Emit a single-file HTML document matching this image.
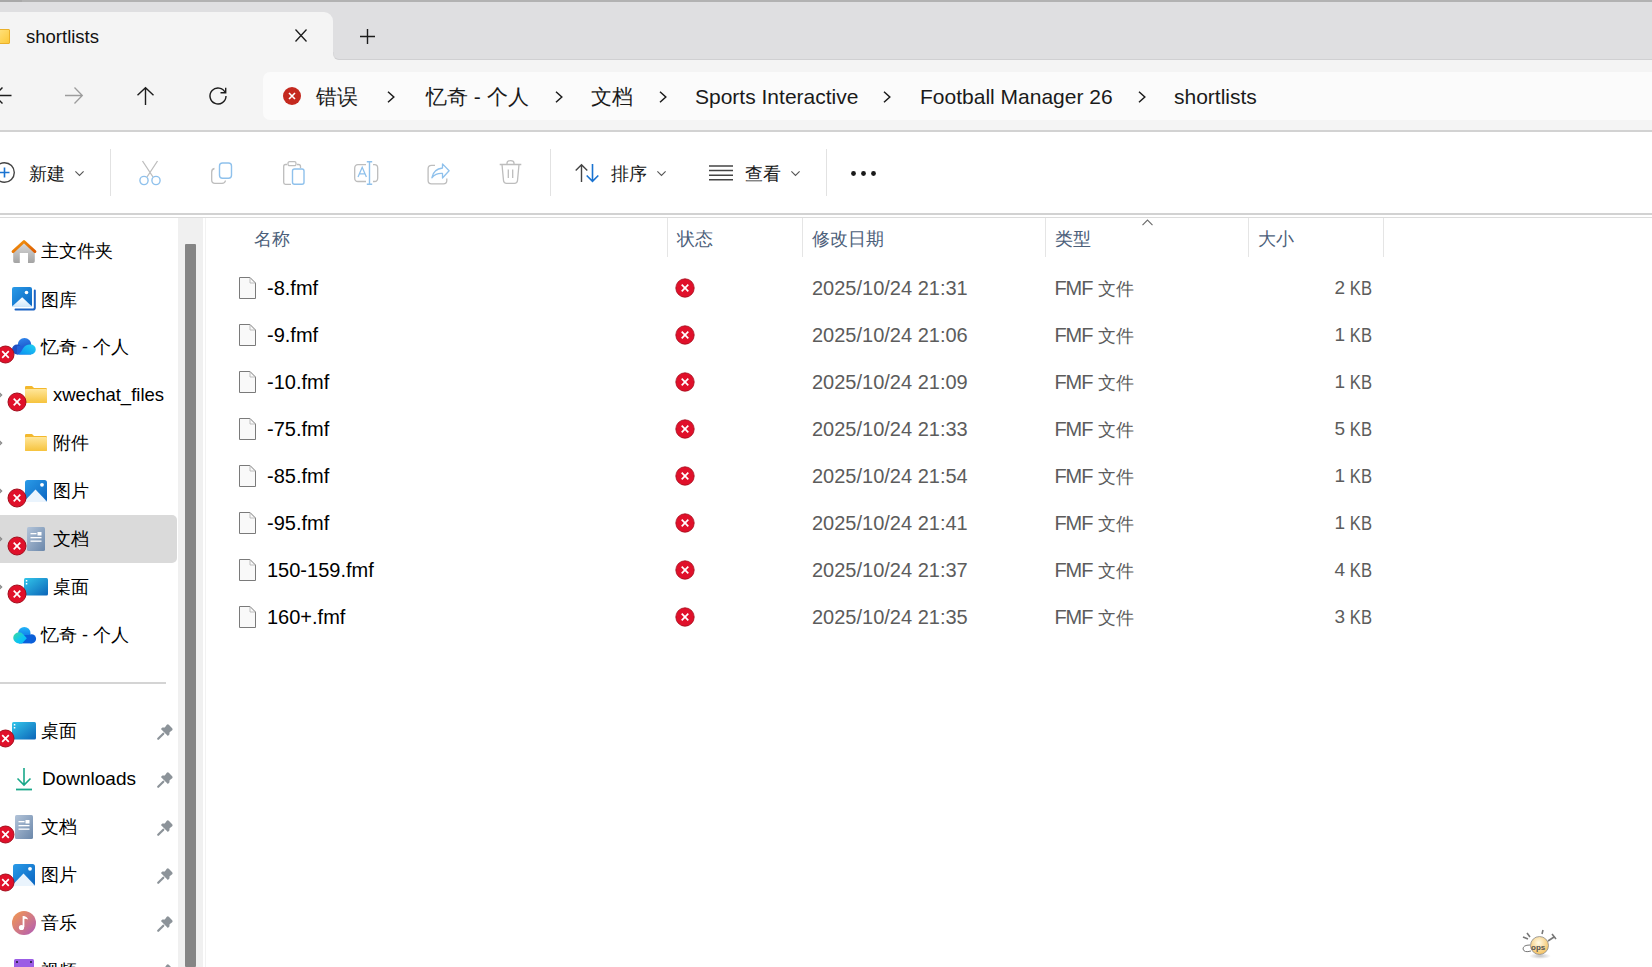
<!DOCTYPE html>
<html><head><meta charset="utf-8">
<style>
*{margin:0;padding:0;box-sizing:border-box}
html,body{width:1652px;height:967px;overflow:hidden;background:#fff;font-family:"Liberation Sans",sans-serif;color:#1a1a1a}
.a{position:absolute;white-space:nowrap}
svg.a{overflow:visible}
.vsep{width:1px;background:#e2e2e2}
.colsep{width:1px;background:#e5e5e5;top:218px;height:39px}
</style></head><body>
<div class="a" style="left:0;top:0;width:1652px;height:2px;background:#b2b2b2"></div>
<div class="a" style="left:0;top:0;width:22px;height:2px;background:#a9a9a9"></div>
<div class="a" style="left:0;top:2px;width:1652px;height:57px;background:#dfdfe1"></div>
<div class="a" style="left:-20px;top:12px;width:353px;height:48px;background:#f4f4f4;border-radius:9px 9px 0 0"></div>
<div class="a" style="left:0;top:59px;width:1652px;height:71px;background:#f4f4f4"></div>
<div class="a" style="left:333px;top:53px;width:6px;height:7px;background:#f4f4f4"></div>
<div class="a" style="left:333px;top:52px;width:1400px;height:7.5px;background:#dfdfe1;border-bottom-left-radius:6px;border-bottom:1px solid #d0d0d2;border-left:1px solid #d8d8da"></div>
<div class="a" style="left:263px;top:72px;width:1400px;height:48px;background:#fbfbfb;border-radius:7px"></div>
<div class="a" style="left:0;top:130px;width:1652px;height:2px;background:#d2d2d2"></div>
<div class="a" style="left:0;top:213px;width:1652px;height:2px;background:#d2d2d2"></div>
<div class="a" style="left:0;top:217px;width:1652px;height:1px;background:#dcdcdc"></div>
<div class="a" style="left:-2px;top:29px;width:11.5px;height:15px;background:linear-gradient(135deg,#ffe07a,#fcc93a);border:1px solid #eab02a;border-radius:1px"></div>
<div class="a " style="left:26px;top:28px;font-size:18.5px;line-height:18.5px;color:#111">shortlists</div>
<svg class="a" style="left:295px;top:29.3px" width="12" height="13" viewBox="0 0 12 13"><path d="M0.5 0.5L11.5 12.5M11.5 0.5L0.5 12.5" stroke="#1c1c1c" stroke-width="1.3"/></svg>
<svg class="a" style="left:360px;top:29px" width="15" height="15" viewBox="0 0 15 15"><path d="M7.5 0V15M0 7.5H15" stroke="#1c1c1c" stroke-width="1.4"/></svg>
<svg class="a" style="left:-6.5px;top:87px" width="19" height="18" viewBox="0 0 19 18"><path d="M8.5 0.5L0.7 8.5L8.5 16.5M0.7 8.5H17.5" stroke="#1c1c1c" stroke-width="1.4" fill="none"/></svg>
<svg class="a" style="left:65px;top:87px" width="18" height="17" viewBox="0 0 18 17"><path d="M9.5 0.5L17.3 8.5L9.5 16.5M17.3 8.5H0" stroke="#9c9c9c" stroke-width="1.3" fill="none"/></svg>
<svg class="a" style="left:137px;top:87px" width="17" height="18" viewBox="0 0 17 18"><path d="M0.5 8.3L8.5 0.7L16.5 8.3M8.5 0.7V18" stroke="#1c1c1c" stroke-width="1.4" fill="none"/></svg>
<svg class="a" style="left:209px;top:87px" width="18" height="18" viewBox="0 0 18 18"><path d="M16.2 5.5A8 8 0 1 0 17 9" stroke="#1c1c1c" stroke-width="1.4" fill="none"/><path d="M16.7 0.8V5.8H11.5" stroke="#1c1c1c" stroke-width="1.4" fill="none"/></svg>
<svg class="a" style="left:283px;top:87px" width="18" height="18" viewBox="0 0 18 18"><circle cx="9" cy="9" r="9" fill="#c4291f"/><path d="M6 6L12 12M12 6L6 12" stroke="#fff" stroke-width="1.6"/></svg>
<div class="a " style="left:316px;top:85.5px;font-size:21px;line-height:21px;">错误</div>
<div class="a " style="left:426px;top:85.5px;font-size:21px;line-height:21px;">忆奇 - 个人</div>
<div class="a " style="left:591px;top:85.5px;font-size:21px;line-height:21px;">文档</div>
<div class="a " style="left:695px;top:86px;font-size:21px;line-height:21px;">Sports Interactive</div>
<div class="a " style="left:920px;top:86px;font-size:21px;line-height:21px;">Football Manager 26</div>
<div class="a " style="left:1174px;top:86px;font-size:21px;line-height:21px;">shortlists</div>
<svg class="a" style="left:387px;top:91px" width="8" height="12" viewBox="0 0 8 12"><path d="M1 0.7L6.8 6L1 11.3" stroke="#1c1c1c" stroke-width="1.5" fill="none"/></svg>
<svg class="a" style="left:555px;top:91px" width="8" height="12" viewBox="0 0 8 12"><path d="M1 0.7L6.8 6L1 11.3" stroke="#1c1c1c" stroke-width="1.5" fill="none"/></svg>
<svg class="a" style="left:659px;top:91px" width="8" height="12" viewBox="0 0 8 12"><path d="M1 0.7L6.8 6L1 11.3" stroke="#1c1c1c" stroke-width="1.5" fill="none"/></svg>
<svg class="a" style="left:883px;top:91px" width="8" height="12" viewBox="0 0 8 12"><path d="M1 0.7L6.8 6L1 11.3" stroke="#1c1c1c" stroke-width="1.5" fill="none"/></svg>
<svg class="a" style="left:1138px;top:91px" width="8" height="12" viewBox="0 0 8 12"><path d="M1 0.7L6.8 6L1 11.3" stroke="#1c1c1c" stroke-width="1.5" fill="none"/></svg>
<svg class="a" style="left:-6px;top:162px" width="22" height="22" viewBox="0 0 22 22"><circle cx="10.5" cy="10.5" r="9.8" stroke="#444" stroke-width="1.4" fill="none"/><path d="M10.5 5.5V15.5M5.5 10.5H15.5" stroke="#1a73d1" stroke-width="1.6"/></svg>
<div class="a " style="left:29px;top:164.5px;font-size:18px;line-height:18px;">新建</div>
<svg class="a" style="left:74.5px;top:171px" width="9" height="5" viewBox="0 0 9 5"><path d="M0.4 0.4L4.5 4.5L8.6 0.4" stroke="#555" stroke-width="1.1" fill="none"/></svg>
<div class="a vsep" style="left:110px;top:149px;height:47px"></div>
<svg class="a" style="left:139px;top:160px" width="22" height="25" viewBox="0 0 22 25"><path d="M3.5 1L14 17M18.5 1L8 17" stroke="#bdbdbd" stroke-width="1.3" fill="none"/><circle cx="5" cy="20.5" r="4.1" fill="#fff" stroke="#8fc1ec" stroke-width="1.4"/><circle cx="17" cy="20.5" r="4.1" fill="#fff" stroke="#8fc1ec" stroke-width="1.4"/></svg>
<svg class="a" style="left:211px;top:162px" width="22" height="22" viewBox="0 0 22 22"><path d="M3.5 6.5Q0.7 7 0.7 10V18Q0.7 21.3 4 21.3H11Q14 21.3 14.5 18.5" stroke="#bdbdbd" stroke-width="1.3" fill="none"/><rect x="8.5" y="1" width="12" height="15.3" rx="3" stroke="#8fc1ec" stroke-width="1.4" fill="none"/></svg>
<svg class="a" style="left:283px;top:161px" width="22" height="24" viewBox="0 0 22 24"><path d="M4 3.5H2.5Q0.7 3.5 0.7 5.5V21.5Q0.7 23.3 2.5 23.3H8M14 3.5H15.5Q17.5 3.5 17.5 5.5V7" stroke="#bdbdbd" stroke-width="1.3" fill="none"/><rect x="5" y="0.7" width="8" height="4" rx="1.5" stroke="#bdbdbd" stroke-width="1.3" fill="none"/><rect x="9.5" y="8" width="11.5" height="15.3" rx="2" stroke="#8fc1ec" stroke-width="1.4" fill="none"/></svg>
<svg class="a" style="left:354px;top:161px" width="25" height="24" viewBox="0 0 25 24"><path d="M12 3.7H4Q0.7 3.7 0.7 7.2V17Q0.7 20.5 4 20.5H12M19 3.7H20.5Q23.7 3.7 23.7 7.2V17Q23.7 20.5 20.5 20.5H19" stroke="#bdbdbd" stroke-width="1.3" fill="none"/><path d="M4 16L8.2 6.3L12.4 16M5.5 12.8H10.9" stroke="#8fc1ec" stroke-width="1.3" fill="none"/><path d="M15.5 0.7V23.3M12.8 0.7H18.2M12.8 23.3H18.2" stroke="#8fc1ec" stroke-width="1.4" fill="none"/></svg>
<svg class="a" style="left:427px;top:162px" width="23" height="22" viewBox="0 0 23 22"><path d="M8 3.4H4.5Q1.1 3.4 1.1 6.8V18.4Q1.1 21.8 4.5 21.8H16.4Q19.8 21.8 19.8 18.4V16.6" stroke="#bdbdbd" stroke-width="1.3" fill="none"/><path d="M4.9 15.7Q6.5 7 15.5 6V1.9L22.1 8.8L15.5 16V11.5Q9 11 4.9 15.7Z" stroke="#8fc1ec" stroke-width="1.3" fill="none" stroke-linejoin="round"/></svg>
<svg class="a" style="left:498.5px;top:160px" width="23" height="24" viewBox="0 0 23 24"><path d="M0.7 4.5H22.3M8 4.5V3Q8 0.7 11.5 0.7Q15 0.7 15 3V4.5M3 4.5L4.5 20.5Q4.8 23.3 7.5 23.3H15.5Q18.2 23.3 18.5 20.5L20 4.5M9.3 9.5V18M13.7 9.5V18" stroke="#bdbdbd" stroke-width="1.3" fill="none"/></svg>
<div class="a vsep" style="left:550px;top:149px;height:47px"></div>
<svg class="a" style="left:575px;top:164px" width="24" height="18" viewBox="0 0 24 18"><path d="M0.7 6.5L6.5 0.7L12.3 6.5M6.5 0.7V18" stroke="#444" stroke-width="1.4" fill="none"/><path d="M11.7 11.5L17.5 17.3L23.3 11.5M17.5 17.3V0" stroke="#1a73d1" stroke-width="1.6" fill="none"/></svg>
<div class="a " style="left:611px;top:164.5px;font-size:18px;line-height:18px;">排序</div>
<svg class="a" style="left:657px;top:171px" width="9" height="5" viewBox="0 0 9 5"><path d="M0.4 0.4L4.5 4.5L8.6 0.4" stroke="#555" stroke-width="1.1" fill="none"/></svg>
<svg class="a" style="left:709px;top:165px" width="24" height="16" viewBox="0 0 24 16"><path d="M0 1H24M0 5.5H24M0 10.2H24M0 14.8H24" stroke="#444" stroke-width="1.4"/></svg>
<div class="a " style="left:745px;top:164.5px;font-size:18px;line-height:18px;">查看</div>
<svg class="a" style="left:790.5px;top:171px" width="9" height="5" viewBox="0 0 9 5"><path d="M0.4 0.4L4.5 4.5L8.6 0.4" stroke="#555" stroke-width="1.1" fill="none"/></svg>
<div class="a vsep" style="left:826px;top:149px;height:47px"></div>
<svg class="a" style="left:851px;top:171px" width="25" height="5" viewBox="0 0 25 5"><circle cx="2.5" cy="2.5" r="2.4" fill="#1a1a1a"/><circle cx="12.5" cy="2.5" r="2.4" fill="#1a1a1a"/><circle cx="22.5" cy="2.5" r="2.4" fill="#1a1a1a"/></svg>
<div class="a" style="left:0;top:515px;width:177px;height:48px;background:#dadada;border-radius:0 5px 5px 0"></div>
<div class="a" style="left:178px;top:218px;width:25px;height:749px;background:#f0f0f0"></div>
<div class="a" style="left:185px;top:244px;width:11px;height:723px;background:#858585;border-radius:1px"></div>
<div class="a" style="left:205px;top:218px;width:1px;height:749px;background:#f2f2f2"></div>
<div class="a" style="left:0;top:682px;width:166px;height:2px;background:#d4d4d4"></div>
<svg class="a" style="left:12px;top:240px" width="24" height="23" viewBox="0 0 24 23"><defs><linearGradient id="hg" x1="0" y1="0" x2="0" y2="1"><stop offset="0" stop-color="#dcdcdc"/><stop offset="1" stop-color="#a3a3a3"/></linearGradient><linearGradient id="hr" x1="0" y1="0" x2="1" y2="1"><stop offset="0" stop-color="#f59a10"/><stop offset="1" stop-color="#dc5a00"/></linearGradient></defs><path d="M1.2 11.5V21.3Q1.2 23 2.9 23H7.8V13H16V23H21.1Q22.8 23 22.8 21.3V11.5L12 2Z" fill="url(#hg)"/><path d="M1 11.6L12 1.5L23 11.6" stroke="url(#hr)" stroke-width="2.8" fill="none" stroke-linejoin="round" stroke-linecap="round"/></svg>
<div class="a " style="left:41px;top:241.5px;font-size:18px;line-height:18px;color:#000">主文件夹</div>
<svg class="a" style="left:12px;top:287px" width="24" height="24" viewBox="0 0 24 24"><defs><linearGradient id="gg287" x1="0" y1="0" x2="1" y2="1"><stop offset="0" stop-color="#2a9be8"/><stop offset="1" stop-color="#0a64c0"/></linearGradient><linearGradient id="gm287" x1="0" y1="0" x2="0" y2="1"><stop offset="0" stop-color="#ffffff"/><stop offset="1" stop-color="#cfe6fa"/></linearGradient></defs><path d="M3.5 22.6H21Q22.8 22.6 22.8 20.8V3.5" stroke="#1a62c4" stroke-width="2" fill="none" stroke-linecap="round"/><rect x="-0.3" y="-0.3" width="20.6" height="20.6" rx="2.3" fill="#fff"/><rect x="0" y="0" width="20" height="20" rx="2" fill="url(#gg287)"/><path d="M0.3 19.2L10.2 10.2L19.7 19.2V19.5Q19.7 20 19 20H1Q0.3 20 0.3 19.5Z" fill="url(#gm287)"/><circle cx="14.5" cy="5.5" r="1.8" fill="#fff"/></svg>
<div class="a " style="left:41px;top:290.5px;font-size:18px;line-height:18px;color:#000">图库</div>
<svg class="a" style="left:12px;top:337px" width="24" height="18" viewBox="0 0 24 18"><defs><linearGradient id="cb337" x1="0" y1="0" x2="0.3" y2="1"><stop offset="0" stop-color="#2f8af0"/><stop offset="1" stop-color="#1a4fc4"/></linearGradient><linearGradient id="cf337" x1="0" y1="1" x2="1" y2="0"><stop offset="0" stop-color="#0a8ef0"/><stop offset="1" stop-color="#22d2f2"/></linearGradient></defs><circle cx="12.5" cy="7.8" r="6.8" fill="url(#cb337)"/><circle cx="5" cy="12.5" r="5" fill="#1d4fc2"/><rect x="5" y="9" width="14" height="8.5" fill="#2060d8"/><path d="M6.5 17.5Q9 15.5 11 11.5Q13.5 7.2 18.5 7.5A5 5 0 0 1 19 17.5Z" fill="url(#cf337)"/></svg>
<svg class="a" style="left:-4.5px;top:344.5px" width="19" height="19" viewBox="0 0 19 19"><circle cx="9.5" cy="9.5" r="8.5" fill="#e0102a" stroke="#a30d1c" stroke-width="1"/><path d="M6.2 6.2L12.8 12.8M12.8 6.2L6.2 12.8" stroke="#fff" stroke-width="1.7"/></svg>
<div class="a " style="left:41px;top:337.5px;font-size:18px;line-height:18px;color:#000">忆奇 - 个人</div>
<svg class="a" style="left:-3px;top:391px" width="6" height="8" viewBox="0 0 6 8"><path d="M1 0.5L4.5 4L1 7.5" stroke="#8a8a8a" stroke-width="1.5" fill="none"/></svg>
<svg class="a" style="left:25px;top:386px" width="22" height="17" viewBox="0 0 22 17"><defs><linearGradient id="fg386" x1="0" y1="0" x2="0" y2="1"><stop offset="0" stop-color="#ffe69a"/><stop offset="1" stop-color="#f6c33d"/></linearGradient></defs><path d="M0 1.2Q0 0 1.2 0H7L9 2H20.8Q22 2 22 3.2V15.8Q22 17 20.8 17H1.2Q0 17 0 15.8Z" fill="#f3b82d"/><path d="M0 4Q0 3 1 3H21Q22 3 22 4V15.8Q22 17 20.8 17H1.2Q0 17 0 15.8Z" fill="url(#fg386)"/></svg>
<svg class="a" style="left:7.0px;top:392.0px" width="20" height="20" viewBox="0 0 20 20"><circle cx="10.0" cy="10.0" r="9.0" fill="#e0102a" stroke="#a30d1c" stroke-width="1"/><path d="M6.7 6.7L13.3 13.3M13.3 6.7L6.7 13.3" stroke="#fff" stroke-width="1.7"/></svg>
<div class="a " style="left:53px;top:385.5px;font-size:18.5px;line-height:18.5px;color:#000">xwechat_files</div>
<svg class="a" style="left:-3px;top:439px" width="6" height="8" viewBox="0 0 6 8"><path d="M1 0.5L4.5 4L1 7.5" stroke="#8a8a8a" stroke-width="1.5" fill="none"/></svg>
<svg class="a" style="left:25px;top:434px" width="22" height="17" viewBox="0 0 22 17"><defs><linearGradient id="fg434" x1="0" y1="0" x2="0" y2="1"><stop offset="0" stop-color="#ffe69a"/><stop offset="1" stop-color="#f6c33d"/></linearGradient></defs><path d="M0 1.2Q0 0 1.2 0H7L9 2H20.8Q22 2 22 3.2V15.8Q22 17 20.8 17H1.2Q0 17 0 15.8Z" fill="#f3b82d"/><path d="M0 4Q0 3 1 3H21Q22 3 22 4V15.8Q22 17 20.8 17H1.2Q0 17 0 15.8Z" fill="url(#fg434)"/></svg>
<div class="a " style="left:53px;top:433.5px;font-size:18px;line-height:18px;color:#000">附件</div>
<svg class="a" style="left:-3px;top:487px" width="6" height="8" viewBox="0 0 6 8"><path d="M1 0.5L4.5 4L1 7.5" stroke="#8a8a8a" stroke-width="1.5" fill="none"/></svg>
<svg class="a" style="left:25px;top:480px" width="22" height="22" viewBox="0 0 22 22"><defs><linearGradient id="pg480" x1="0" y1="0" x2="1" y2="1"><stop offset="0" stop-color="#2a9be8"/><stop offset="1" stop-color="#0a64c0"/></linearGradient></defs><rect x="0" y="0" width="22" height="22" rx="2.5" fill="url(#pg480)"/><path d="M0 20.5L10.5 9.5L21 20.5V22H0Z" fill="#eaf4fd"/><circle cx="17" cy="4.8" r="1.9" fill="#fff"/></svg>
<svg class="a" style="left:7.0px;top:488.0px" width="20" height="20" viewBox="0 0 20 20"><circle cx="10.0" cy="10.0" r="9.0" fill="#e0102a" stroke="#a30d1c" stroke-width="1"/><path d="M6.7 6.7L13.3 13.3M13.3 6.7L6.7 13.3" stroke="#fff" stroke-width="1.7"/></svg>
<div class="a " style="left:53px;top:481.5px;font-size:18px;line-height:18px;color:#000">图片</div>
<svg class="a" style="left:-3px;top:535px" width="6" height="8" viewBox="0 0 6 8"><path d="M1 0.5L4.5 4L1 7.5" stroke="#8a8a8a" stroke-width="1.5" fill="none"/></svg>
<svg class="a" style="left:27px;top:527px" width="18" height="24" viewBox="0 0 18 24"><defs><linearGradient id="dg527" x1="0" y1="0" x2="1" y2="1"><stop offset="0" stop-color="#b3c4d9"/><stop offset="1" stop-color="#6b87aa"/></linearGradient></defs><rect x="0" y="0" width="18" height="24" rx="1.5" fill="url(#dg527)"/><rect x="3.5" y="6" width="6" height="1.3" fill="#fff"/><rect x="10.5" y="5" width="4" height="3.5" fill="#fff"/><rect x="3.5" y="10" width="11" height="1.3" fill="#fff"/><rect x="3.5" y="13.5" width="11" height="1.3" fill="#fff"/></svg>
<svg class="a" style="left:7.0px;top:536.0px" width="20" height="20" viewBox="0 0 20 20"><circle cx="10.0" cy="10.0" r="9.0" fill="#e0102a" stroke="#a30d1c" stroke-width="1"/><path d="M6.7 6.7L13.3 13.3M13.3 6.7L6.7 13.3" stroke="#fff" stroke-width="1.7"/></svg>
<div class="a " style="left:53px;top:529.5px;font-size:18px;line-height:18px;color:#000">文档</div>
<svg class="a" style="left:-3px;top:583px" width="6" height="8" viewBox="0 0 6 8"><path d="M1 0.5L4.5 4L1 7.5" stroke="#8a8a8a" stroke-width="1.5" fill="none"/></svg>
<svg class="a" style="left:24px;top:578px" width="24" height="18" viewBox="0 0 24 18"><defs><linearGradient id="kg578" x1="0" y1="0" x2="1" y2="1"><stop offset="0" stop-color="#33c6ea"/><stop offset="1" stop-color="#0b64b8"/></linearGradient></defs><rect x="0" y="0" width="24" height="17.5" rx="1.5" fill="url(#kg578)"/><rect x="1.8" y="2" width="1.5" height="1.5" fill="#fff"/><rect x="1.8" y="5" width="1.5" height="1.5" fill="#fff"/></svg>
<svg class="a" style="left:7.0px;top:584.0px" width="20" height="20" viewBox="0 0 20 20"><circle cx="10.0" cy="10.0" r="9.0" fill="#e0102a" stroke="#a30d1c" stroke-width="1"/><path d="M6.7 6.7L13.3 13.3M13.3 6.7L6.7 13.3" stroke="#fff" stroke-width="1.7"/></svg>
<div class="a " style="left:53px;top:577.5px;font-size:18px;line-height:18px;color:#000">桌面</div>
<svg class="a" style="left:12.5px;top:626.5px" width="24" height="17" viewBox="0 0 24 17"><defs><linearGradient id="ct626.5" x1="0" y1="0" x2="1" y2="1"><stop offset="0" stop-color="#3ddc9c"/><stop offset="0.6" stop-color="#0cc4f2"/><stop offset="1" stop-color="#0ab4f5"/></linearGradient><linearGradient id="cu626.5" x1="0" y1="0" x2="0" y2="1"><stop offset="0" stop-color="#22b4f8"/><stop offset="1" stop-color="#0a6ae6"/></linearGradient></defs><circle cx="11.3" cy="6.2" r="6.2" fill="url(#cu626.5)"/><circle cx="18.5" cy="11.8" r="4.6" fill="#0b5fd8"/><rect x="6" y="8" width="12.5" height="8.4" fill="#0a60dc"/><path d="M0.2 11A5.8 5.8 0 0 1 6 5.2Q8.5 5.3 10.5 7.5L13.8 11.2L9 16.4H6A5.8 5.8 0 0 1 0.2 11Z" fill="url(#ct626.5)"/></svg>
<div class="a " style="left:41px;top:625.5px;font-size:18px;line-height:18px;color:#000">忆奇 - 个人</div>
<svg class="a" style="left:12px;top:722px" width="24" height="18" viewBox="0 0 24 18"><defs><linearGradient id="kg722" x1="0" y1="0" x2="1" y2="1"><stop offset="0" stop-color="#33c6ea"/><stop offset="1" stop-color="#0b64b8"/></linearGradient></defs><rect x="0" y="0" width="24" height="17.5" rx="1.5" fill="url(#kg722)"/><rect x="1.8" y="2" width="1.5" height="1.5" fill="#fff"/><rect x="1.8" y="5" width="1.5" height="1.5" fill="#fff"/></svg>
<svg class="a" style="left:-4.0px;top:728.5px" width="19" height="19" viewBox="0 0 19 19"><circle cx="9.5" cy="9.5" r="8.5" fill="#e0102a" stroke="#a30d1c" stroke-width="1"/><path d="M6.2 6.2L12.8 12.8M12.8 6.2L6.2 12.8" stroke="#fff" stroke-width="1.7"/></svg>
<div class="a " style="left:41px;top:721.5px;font-size:18px;line-height:18px;color:#000">桌面</div>
<svg class="a" style="left:157px;top:723.5px" width="16" height="16" viewBox="0 0 16 16"><path d="M9.8 0.8Q10.8 -0.1 11.8 0.8L15.2 4.2Q16.1 5.2 15.2 6.2L12.6 8.2L12.4 10.6L10.9 12.1L3.9 5.1L5.4 3.6L7.8 3.4Z" fill="#8c9399"/><path d="M6.3 9.7L1.2 14.8" stroke="#8c9399" stroke-width="2.2" stroke-linecap="round"/></svg>
<svg class="a" style="left:16px;top:768px" width="16" height="23" viewBox="0 0 16 23"><path d="M8 0V17M1.5 10.5L8 17L14.5 10.5" stroke="#1aa88a" stroke-width="1.6" fill="none"/><path d="M0 21.5H16" stroke="#1aa88a" stroke-width="1.8"/></svg>
<div class="a " style="left:42px;top:769px;font-size:19px;line-height:19px;color:#000">Downloads</div>
<svg class="a" style="left:157px;top:771.5px" width="16" height="16" viewBox="0 0 16 16"><path d="M9.8 0.8Q10.8 -0.1 11.8 0.8L15.2 4.2Q16.1 5.2 15.2 6.2L12.6 8.2L12.4 10.6L10.9 12.1L3.9 5.1L5.4 3.6L7.8 3.4Z" fill="#8c9399"/><path d="M6.3 9.7L1.2 14.8" stroke="#8c9399" stroke-width="2.2" stroke-linecap="round"/></svg>
<svg class="a" style="left:15px;top:815px" width="18" height="24" viewBox="0 0 18 24"><defs><linearGradient id="dg815" x1="0" y1="0" x2="1" y2="1"><stop offset="0" stop-color="#b3c4d9"/><stop offset="1" stop-color="#6b87aa"/></linearGradient></defs><rect x="0" y="0" width="18" height="24" rx="1.5" fill="url(#dg815)"/><rect x="3.5" y="6" width="6" height="1.3" fill="#fff"/><rect x="10.5" y="5" width="4" height="3.5" fill="#fff"/><rect x="3.5" y="10" width="11" height="1.3" fill="#fff"/><rect x="3.5" y="13.5" width="11" height="1.3" fill="#fff"/></svg>
<svg class="a" style="left:-4.0px;top:824.5px" width="19" height="19" viewBox="0 0 19 19"><circle cx="9.5" cy="9.5" r="8.5" fill="#e0102a" stroke="#a30d1c" stroke-width="1"/><path d="M6.2 6.2L12.8 12.8M12.8 6.2L6.2 12.8" stroke="#fff" stroke-width="1.7"/></svg>
<div class="a " style="left:41px;top:817.5px;font-size:18px;line-height:18px;color:#000">文档</div>
<svg class="a" style="left:157px;top:819.5px" width="16" height="16" viewBox="0 0 16 16"><path d="M9.8 0.8Q10.8 -0.1 11.8 0.8L15.2 4.2Q16.1 5.2 15.2 6.2L12.6 8.2L12.4 10.6L10.9 12.1L3.9 5.1L5.4 3.6L7.8 3.4Z" fill="#8c9399"/><path d="M6.3 9.7L1.2 14.8" stroke="#8c9399" stroke-width="2.2" stroke-linecap="round"/></svg>
<svg class="a" style="left:13px;top:864px" width="22" height="22" viewBox="0 0 22 22"><defs><linearGradient id="pg864" x1="0" y1="0" x2="1" y2="1"><stop offset="0" stop-color="#2a9be8"/><stop offset="1" stop-color="#0a64c0"/></linearGradient></defs><rect x="0" y="0" width="22" height="22" rx="2.5" fill="url(#pg864)"/><path d="M0 20.5L10.5 9.5L21 20.5V22H0Z" fill="#eaf4fd"/><circle cx="17" cy="4.8" r="1.9" fill="#fff"/></svg>
<svg class="a" style="left:-4.5px;top:872.5px" width="19" height="19" viewBox="0 0 19 19"><circle cx="9.5" cy="9.5" r="8.5" fill="#e0102a" stroke="#a30d1c" stroke-width="1"/><path d="M6.2 6.2L12.8 12.8M12.8 6.2L6.2 12.8" stroke="#fff" stroke-width="1.7"/></svg>
<div class="a " style="left:41px;top:865.5px;font-size:18px;line-height:18px;color:#000">图片</div>
<svg class="a" style="left:157px;top:867.5px" width="16" height="16" viewBox="0 0 16 16"><path d="M9.8 0.8Q10.8 -0.1 11.8 0.8L15.2 4.2Q16.1 5.2 15.2 6.2L12.6 8.2L12.4 10.6L10.9 12.1L3.9 5.1L5.4 3.6L7.8 3.4Z" fill="#8c9399"/><path d="M6.3 9.7L1.2 14.8" stroke="#8c9399" stroke-width="2.2" stroke-linecap="round"/></svg>
<svg class="a" style="left:12px;top:911px" width="24" height="24" viewBox="0 0 24 24"><defs><linearGradient id="mg" x1="0" y1="0" x2="1" y2="1"><stop offset="0" stop-color="#f59a4c"/><stop offset="1" stop-color="#b05bb8"/></linearGradient></defs><circle cx="12" cy="12" r="12" fill="url(#mg)"/><path d="M11.5 5V16" stroke="#fff" stroke-width="1.8"/><circle cx="9.5" cy="16.5" r="2.6" fill="#fff"/><path d="M11.5 5Q15.5 5.5 16 8.5Q14 7.5 11.5 8Z" fill="#fff"/></svg>
<div class="a " style="left:41px;top:913.5px;font-size:18px;line-height:18px;color:#000">音乐</div>
<svg class="a" style="left:157px;top:915.5px" width="16" height="16" viewBox="0 0 16 16"><path d="M9.8 0.8Q10.8 -0.1 11.8 0.8L15.2 4.2Q16.1 5.2 15.2 6.2L12.6 8.2L12.4 10.6L10.9 12.1L3.9 5.1L5.4 3.6L7.8 3.4Z" fill="#8c9399"/><path d="M6.3 9.7L1.2 14.8" stroke="#8c9399" stroke-width="2.2" stroke-linecap="round"/></svg>
<svg class="a" style="left:14px;top:959px" width="20" height="10" viewBox="0 0 20 10"><rect x="0" y="0" width="20" height="10" rx="1.5" fill="#9b5de5"/><rect x="2" y="2" width="2" height="2" fill="#3b2a5e"/><rect x="16" y="2" width="2" height="2" fill="#3b2a5e"/></svg>
<div class="a " style="left:41px;top:961.5px;font-size:18px;line-height:18px;color:#000">视频</div>
<svg class="a" style="left:157px;top:963.5px" width="16" height="16" viewBox="0 0 16 16"><path d="M9.8 0.8Q10.8 -0.1 11.8 0.8L15.2 4.2Q16.1 5.2 15.2 6.2L12.6 8.2L12.4 10.6L10.9 12.1L3.9 5.1L5.4 3.6L7.8 3.4Z" fill="#8c9399"/><path d="M6.3 9.7L1.2 14.8" stroke="#8c9399" stroke-width="2.2" stroke-linecap="round"/></svg>
<div class="a colsep" style="left:667px"></div>
<div class="a colsep" style="left:802px"></div>
<div class="a colsep" style="left:1045px"></div>
<div class="a colsep" style="left:1248px"></div>
<div class="a colsep" style="left:1383px"></div>
<svg class="a" style="left:1142px;top:219px" width="11" height="7" viewBox="0 0 11 7"><path d="M0.5 6.2L5.5 1L10.5 6.2" stroke="#6b6b6b" stroke-width="1.1" fill="none"/></svg>
<div class="a " style="left:254px;top:229.5px;font-size:18px;line-height:18px;color:#4c607a">名称</div>
<div class="a " style="left:677px;top:229.5px;font-size:18px;line-height:18px;color:#4c607a">状态</div>
<div class="a " style="left:812px;top:229.5px;font-size:18px;line-height:18px;color:#4c607a">修改日期</div>
<div class="a " style="left:1055px;top:229.5px;font-size:18px;line-height:18px;color:#4c607a">类型</div>
<div class="a " style="left:1258px;top:229.5px;font-size:18px;line-height:18px;color:#4c607a">大小</div>
<svg class="a" style="left:239px;top:277px" width="17" height="22" viewBox="0 0 17 22"><path d="M0.5 0.5H11L16.5 6V21.5H0.5Z" fill="#f9f9f9" stroke="#7a7a7a" stroke-width="1" stroke-linejoin="round"/><path d="M11 0.5V6H16.5" stroke="#b0b0b0" stroke-width="0.8" fill="none"/></svg>
<div class="a " style="left:267px;top:277.5px;font-size:20px;line-height:20px;color:#000">-8.fmf</div>
<svg class="a" style="left:675px;top:278px" width="20" height="20" viewBox="0 0 20 20"><circle cx="10" cy="10" r="9.2" fill="#e0102a" stroke="#a30d1c" stroke-width="0.8"/><path d="M6.7 6.7L13.3 13.3M13.3 6.7L6.7 13.3" stroke="#fff" stroke-width="1.7"/></svg>
<div class="a " style="left:812px;top:277.5px;font-size:20px;line-height:20px;color:#5c5c5c">2025/10/24 21:31</div>
<div class="a " style="left:1054.5px;top:277.5px;font-size:20px;line-height:20px;color:#5c5c5c"><span style="letter-spacing:-1.1px">FMF</span> <span style="font-size:18px">文件</span></div>
<div class="a" style="left:1245px;width:100px;text-align:right;top:277.5px;font-size:19px;line-height:20px;color:#5c5c5c">2</div>
<div class="a" style="left:1272px;width:100px;text-align:right;top:277.5px;font-size:20px;line-height:20px;color:#5c5c5c;transform:scaleX(0.83);transform-origin:100% 50%">KB</div>
<svg class="a" style="left:239px;top:324px" width="17" height="22" viewBox="0 0 17 22"><path d="M0.5 0.5H11L16.5 6V21.5H0.5Z" fill="#f9f9f9" stroke="#7a7a7a" stroke-width="1" stroke-linejoin="round"/><path d="M11 0.5V6H16.5" stroke="#b0b0b0" stroke-width="0.8" fill="none"/></svg>
<div class="a " style="left:267px;top:324.5px;font-size:20px;line-height:20px;color:#000">-9.fmf</div>
<svg class="a" style="left:675px;top:325px" width="20" height="20" viewBox="0 0 20 20"><circle cx="10" cy="10" r="9.2" fill="#e0102a" stroke="#a30d1c" stroke-width="0.8"/><path d="M6.7 6.7L13.3 13.3M13.3 6.7L6.7 13.3" stroke="#fff" stroke-width="1.7"/></svg>
<div class="a " style="left:812px;top:324.5px;font-size:20px;line-height:20px;color:#5c5c5c">2025/10/24 21:06</div>
<div class="a " style="left:1054.5px;top:324.5px;font-size:20px;line-height:20px;color:#5c5c5c"><span style="letter-spacing:-1.1px">FMF</span> <span style="font-size:18px">文件</span></div>
<div class="a" style="left:1245px;width:100px;text-align:right;top:324.5px;font-size:19px;line-height:20px;color:#5c5c5c">1</div>
<div class="a" style="left:1272px;width:100px;text-align:right;top:324.5px;font-size:20px;line-height:20px;color:#5c5c5c;transform:scaleX(0.83);transform-origin:100% 50%">KB</div>
<svg class="a" style="left:239px;top:371px" width="17" height="22" viewBox="0 0 17 22"><path d="M0.5 0.5H11L16.5 6V21.5H0.5Z" fill="#f9f9f9" stroke="#7a7a7a" stroke-width="1" stroke-linejoin="round"/><path d="M11 0.5V6H16.5" stroke="#b0b0b0" stroke-width="0.8" fill="none"/></svg>
<div class="a " style="left:267px;top:371.5px;font-size:20px;line-height:20px;color:#000">-10.fmf</div>
<svg class="a" style="left:675px;top:372px" width="20" height="20" viewBox="0 0 20 20"><circle cx="10" cy="10" r="9.2" fill="#e0102a" stroke="#a30d1c" stroke-width="0.8"/><path d="M6.7 6.7L13.3 13.3M13.3 6.7L6.7 13.3" stroke="#fff" stroke-width="1.7"/></svg>
<div class="a " style="left:812px;top:371.5px;font-size:20px;line-height:20px;color:#5c5c5c">2025/10/24 21:09</div>
<div class="a " style="left:1054.5px;top:371.5px;font-size:20px;line-height:20px;color:#5c5c5c"><span style="letter-spacing:-1.1px">FMF</span> <span style="font-size:18px">文件</span></div>
<div class="a" style="left:1245px;width:100px;text-align:right;top:371.5px;font-size:19px;line-height:20px;color:#5c5c5c">1</div>
<div class="a" style="left:1272px;width:100px;text-align:right;top:371.5px;font-size:20px;line-height:20px;color:#5c5c5c;transform:scaleX(0.83);transform-origin:100% 50%">KB</div>
<svg class="a" style="left:239px;top:418px" width="17" height="22" viewBox="0 0 17 22"><path d="M0.5 0.5H11L16.5 6V21.5H0.5Z" fill="#f9f9f9" stroke="#7a7a7a" stroke-width="1" stroke-linejoin="round"/><path d="M11 0.5V6H16.5" stroke="#b0b0b0" stroke-width="0.8" fill="none"/></svg>
<div class="a " style="left:267px;top:418.5px;font-size:20px;line-height:20px;color:#000">-75.fmf</div>
<svg class="a" style="left:675px;top:419px" width="20" height="20" viewBox="0 0 20 20"><circle cx="10" cy="10" r="9.2" fill="#e0102a" stroke="#a30d1c" stroke-width="0.8"/><path d="M6.7 6.7L13.3 13.3M13.3 6.7L6.7 13.3" stroke="#fff" stroke-width="1.7"/></svg>
<div class="a " style="left:812px;top:418.5px;font-size:20px;line-height:20px;color:#5c5c5c">2025/10/24 21:33</div>
<div class="a " style="left:1054.5px;top:418.5px;font-size:20px;line-height:20px;color:#5c5c5c"><span style="letter-spacing:-1.1px">FMF</span> <span style="font-size:18px">文件</span></div>
<div class="a" style="left:1245px;width:100px;text-align:right;top:418.5px;font-size:19px;line-height:20px;color:#5c5c5c">5</div>
<div class="a" style="left:1272px;width:100px;text-align:right;top:418.5px;font-size:20px;line-height:20px;color:#5c5c5c;transform:scaleX(0.83);transform-origin:100% 50%">KB</div>
<svg class="a" style="left:239px;top:465px" width="17" height="22" viewBox="0 0 17 22"><path d="M0.5 0.5H11L16.5 6V21.5H0.5Z" fill="#f9f9f9" stroke="#7a7a7a" stroke-width="1" stroke-linejoin="round"/><path d="M11 0.5V6H16.5" stroke="#b0b0b0" stroke-width="0.8" fill="none"/></svg>
<div class="a " style="left:267px;top:465.5px;font-size:20px;line-height:20px;color:#000">-85.fmf</div>
<svg class="a" style="left:675px;top:466px" width="20" height="20" viewBox="0 0 20 20"><circle cx="10" cy="10" r="9.2" fill="#e0102a" stroke="#a30d1c" stroke-width="0.8"/><path d="M6.7 6.7L13.3 13.3M13.3 6.7L6.7 13.3" stroke="#fff" stroke-width="1.7"/></svg>
<div class="a " style="left:812px;top:465.5px;font-size:20px;line-height:20px;color:#5c5c5c">2025/10/24 21:54</div>
<div class="a " style="left:1054.5px;top:465.5px;font-size:20px;line-height:20px;color:#5c5c5c"><span style="letter-spacing:-1.1px">FMF</span> <span style="font-size:18px">文件</span></div>
<div class="a" style="left:1245px;width:100px;text-align:right;top:465.5px;font-size:19px;line-height:20px;color:#5c5c5c">1</div>
<div class="a" style="left:1272px;width:100px;text-align:right;top:465.5px;font-size:20px;line-height:20px;color:#5c5c5c;transform:scaleX(0.83);transform-origin:100% 50%">KB</div>
<svg class="a" style="left:239px;top:512px" width="17" height="22" viewBox="0 0 17 22"><path d="M0.5 0.5H11L16.5 6V21.5H0.5Z" fill="#f9f9f9" stroke="#7a7a7a" stroke-width="1" stroke-linejoin="round"/><path d="M11 0.5V6H16.5" stroke="#b0b0b0" stroke-width="0.8" fill="none"/></svg>
<div class="a " style="left:267px;top:512.5px;font-size:20px;line-height:20px;color:#000">-95.fmf</div>
<svg class="a" style="left:675px;top:513px" width="20" height="20" viewBox="0 0 20 20"><circle cx="10" cy="10" r="9.2" fill="#e0102a" stroke="#a30d1c" stroke-width="0.8"/><path d="M6.7 6.7L13.3 13.3M13.3 6.7L6.7 13.3" stroke="#fff" stroke-width="1.7"/></svg>
<div class="a " style="left:812px;top:512.5px;font-size:20px;line-height:20px;color:#5c5c5c">2025/10/24 21:41</div>
<div class="a " style="left:1054.5px;top:512.5px;font-size:20px;line-height:20px;color:#5c5c5c"><span style="letter-spacing:-1.1px">FMF</span> <span style="font-size:18px">文件</span></div>
<div class="a" style="left:1245px;width:100px;text-align:right;top:512.5px;font-size:19px;line-height:20px;color:#5c5c5c">1</div>
<div class="a" style="left:1272px;width:100px;text-align:right;top:512.5px;font-size:20px;line-height:20px;color:#5c5c5c;transform:scaleX(0.83);transform-origin:100% 50%">KB</div>
<svg class="a" style="left:239px;top:559px" width="17" height="22" viewBox="0 0 17 22"><path d="M0.5 0.5H11L16.5 6V21.5H0.5Z" fill="#f9f9f9" stroke="#7a7a7a" stroke-width="1" stroke-linejoin="round"/><path d="M11 0.5V6H16.5" stroke="#b0b0b0" stroke-width="0.8" fill="none"/></svg>
<div class="a " style="left:267px;top:559.5px;font-size:20px;line-height:20px;color:#000">150-159.fmf</div>
<svg class="a" style="left:675px;top:560px" width="20" height="20" viewBox="0 0 20 20"><circle cx="10" cy="10" r="9.2" fill="#e0102a" stroke="#a30d1c" stroke-width="0.8"/><path d="M6.7 6.7L13.3 13.3M13.3 6.7L6.7 13.3" stroke="#fff" stroke-width="1.7"/></svg>
<div class="a " style="left:812px;top:559.5px;font-size:20px;line-height:20px;color:#5c5c5c">2025/10/24 21:37</div>
<div class="a " style="left:1054.5px;top:559.5px;font-size:20px;line-height:20px;color:#5c5c5c"><span style="letter-spacing:-1.1px">FMF</span> <span style="font-size:18px">文件</span></div>
<div class="a" style="left:1245px;width:100px;text-align:right;top:559.5px;font-size:19px;line-height:20px;color:#5c5c5c">4</div>
<div class="a" style="left:1272px;width:100px;text-align:right;top:559.5px;font-size:20px;line-height:20px;color:#5c5c5c;transform:scaleX(0.83);transform-origin:100% 50%">KB</div>
<svg class="a" style="left:239px;top:606px" width="17" height="22" viewBox="0 0 17 22"><path d="M0.5 0.5H11L16.5 6V21.5H0.5Z" fill="#f9f9f9" stroke="#7a7a7a" stroke-width="1" stroke-linejoin="round"/><path d="M11 0.5V6H16.5" stroke="#b0b0b0" stroke-width="0.8" fill="none"/></svg>
<div class="a " style="left:267px;top:606.5px;font-size:20px;line-height:20px;color:#000">160+.fmf</div>
<svg class="a" style="left:675px;top:607px" width="20" height="20" viewBox="0 0 20 20"><circle cx="10" cy="10" r="9.2" fill="#e0102a" stroke="#a30d1c" stroke-width="0.8"/><path d="M6.7 6.7L13.3 13.3M13.3 6.7L6.7 13.3" stroke="#fff" stroke-width="1.7"/></svg>
<div class="a " style="left:812px;top:606.5px;font-size:20px;line-height:20px;color:#5c5c5c">2025/10/24 21:35</div>
<div class="a " style="left:1054.5px;top:606.5px;font-size:20px;line-height:20px;color:#5c5c5c"><span style="letter-spacing:-1.1px">FMF</span> <span style="font-size:18px">文件</span></div>
<div class="a" style="left:1245px;width:100px;text-align:right;top:606.5px;font-size:19px;line-height:20px;color:#5c5c5c">3</div>
<div class="a" style="left:1272px;width:100px;text-align:right;top:606.5px;font-size:20px;line-height:20px;color:#5c5c5c;transform:scaleX(0.83);transform-origin:100% 50%">KB</div>
<svg class="a" style="left:1520px;top:925px" width="40" height="36" viewBox="0 0 40 36"><defs><radialGradient id="og" cx="0.45" cy="0.35" r="0.6"><stop offset="0" stop-color="#fffbe8"/><stop offset="1" stop-color="#f5c56a"/></radialGradient><radialGradient id="os" cx="0.5" cy="0.5" r="0.5"><stop offset="0" stop-color="#999" stop-opacity="0.6"/><stop offset="1" stop-color="#999" stop-opacity="0"/></radialGradient></defs><ellipse cx="20" cy="31" rx="11" ry="3" fill="url(#os)"/><path d="M11 26Q4 28 3 24Q3 20 10 20" stroke="#777" stroke-width="1" fill="none"/><circle cx="19.5" cy="20.5" r="9" fill="url(#og)" stroke="#8a8a8a" stroke-width="0.8"/><text x="11" y="25" font-size="8" font-weight="bold" fill="#555" font-family="Liberation Sans">ops</text><path d="M28 16L34 12M32 9L36 14M7 8L10 12M3 12L8 14M23 5L22 9" stroke="#777" stroke-width="1.6"/></svg>
</body></html>
